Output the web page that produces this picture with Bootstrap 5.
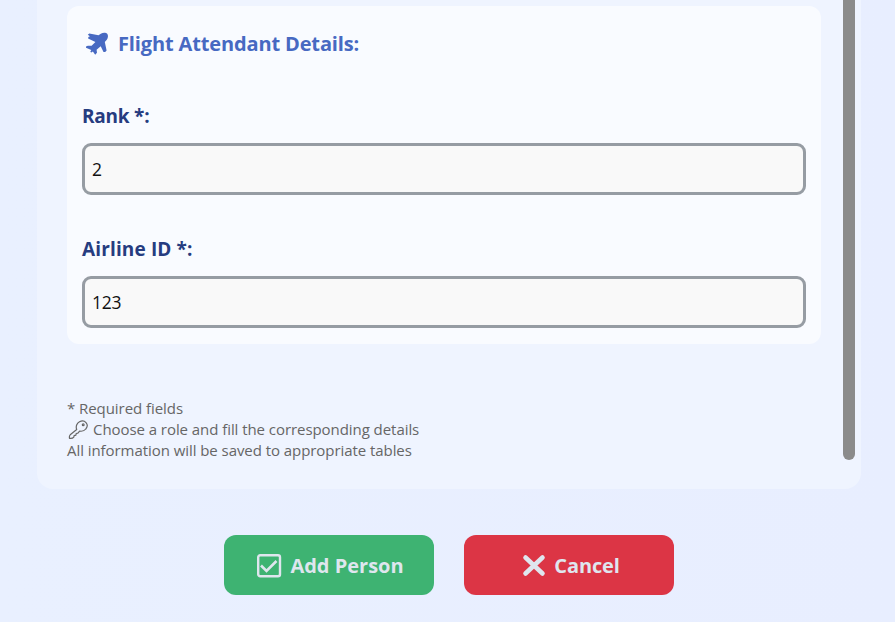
<!DOCTYPE html>
<html lang="en">
<head>
<meta charset="utf-8">
<meta name="viewport" content="width=device-width, initial-scale=1">
<title>Add Person</title>
<link href="https://cdn.jsdelivr.net/npm/bootstrap@5.3.0/dist/css/bootstrap.min.css" rel="stylesheet">
<style>
body{font-family:"Segoe UI","Open Sans","Noto Sans",sans-serif;background:linear-gradient(90deg,#e9f0ff,#e8eeff);height:622px;overflow:hidden}
.panel{margin-left:37px;width:824px;height:489px;background:#eff4ff;border-radius:0 0 16px 16px;padding:6px 6px 0 30px}
.content-col{width:754px}
.details{height:338px;background:#f9fbff;border-radius:12px;padding:22px 15px 0}
.details-title{height:32px;font-size:20px;line-height:32px;color:#4769c2;padding-left:3px;letter-spacing:-.14px;gap:9px;margin-bottom:43px}
.field-label{display:block;font-size:19px;line-height:26px;color:#263c80;letter-spacing:-.22px;margin-bottom:14px}
.field + .field{margin-top:41px}
.field + .field .field-label{letter-spacing:.14px}
.field-input{height:52px;border:3px solid #969ca3;border-radius:9px;background:#f9f9f9;font-size:17.500px;letter-spacing:-.3px;color:#111;padding:0 7px}
.field-input:focus{background:#f9f9f9;box-shadow:none;border-color:#4769c2}
.notes{margin-top:54px;font-size:15px;line-height:21px;color:#666;letter-spacing:-.06px}
.track{width:12px;height:454px}
.thumb{height:460px;margin-top:-6px;background:#8b8b8b;border-radius:0 0 6px 6px}
.actions{margin-top:46px;padding-left:224px;gap:30px}
.action{width:210px;height:60px;border:0;border-radius:12px;font-size:20px;color:#dfe6ee;padding:7px 11px 6px 13px}
.action:hover{color:#fff}
.add{background:#3eb372}.cancel{background:#dc3545;letter-spacing:-.15px;padding-left:15px}
.add:hover{background:#36a267}.cancel:hover{background:#c92f3e}
</style>
<script src="https://cdn.jsdelivr.net/npm/bootstrap@5.3.0/dist/js/bootstrap.bundle.min.js"></script>
</head>
<body>
<main class="panel d-flex justify-content-between">
  <div class="content-col">
    <section class="details">
      <h2 class="details-title d-flex align-items-center fw-bold">
        <svg width="24" height="24" viewBox="0 0 24 24" fill="#4769c2"><path d="M2.800 2.800 4.300 1.600l9.200 1.700 2.300-1.600c2.100-1.100 5.100-1.200 6.400.1 1.200 1.400 1 4.200-.4 6l-2 2.300 1.800 8.500-1.400 1.500-1.700-.2-2.800-5.600-4.100 3.500.4 3-1.800 2-2.300-3.200-1.700 1-.9-.9 1-1.700L1 15.700l0-1.300 1.800-.7 3.800.1L10.400 10 3.100 6.400l.3-1.500 1.500-.7Z"/></svg>
        <span>Flight Attendant Details:</span>
      </h2>
      <div class="field">
        <label class="field-label fw-bold" for="rank">Rank *:</label>
        <input id="rank" class="field-input form-control" value="2">
      </div>
      <div class="field">
        <label class="field-label fw-bold" for="airline">Airline ID *:</label>
        <input id="airline" class="field-input form-control" value="123">
      </div>
    </section>
    <div class="notes">
      <div>* Required fields</div>
      <div class="d-flex align-items-center"><svg width="22" height="20" viewBox="0 0 22 20" fill="none" stroke="#666" stroke-width="1.200" stroke-linejoin="round" class="me-1"><path d="M9.700 9.500C8.500 6.500 9.800 3.200 12.500 1.800c2.200-1.200 5-.9 6.500.8 1.500 1.700 1.400 4.500-.2 6.400-1.500 1.900-3.800 2.500-6.200 2.100l-1.700 2-1.700.4-.3 1.700-1.800.5-.3 1.400c-1 1.200-2.500 1.500-4.300 1.200-.3-1.500-.2-2.600.7-3.500Z"/><circle cx="16.200" cy="4.800" r=".9"/></svg><span>Choose a role and fill the corresponding details</span></div>
      <div>All information will be saved to appropriate tables</div>
    </div>
  </div>
  <div class="track"><div class="thumb"></div></div>
</main>
<div class="actions d-flex">
  <button class="action add btn fw-bold d-flex align-items-center justify-content-center gap-2"><svg width="26" height="26" viewBox="0 0 26 26" fill="none" stroke="#dfe6ee" stroke-width="2.400"><rect x="2.200" y="2.200" width="21.800" height="21" rx="2"/><path d="m5 12.500 5.500 5.500L20.500 8" stroke-width="2.600"/></svg><span>Add Person</span></button>
  <button class="action cancel btn fw-bold d-flex align-items-center justify-content-center gap-2"><svg width="24" height="24" viewBox="0 0 24 24" stroke="#dfe6ee" stroke-width="4.600" stroke-linecap="round"><path d="m3.500 3.500 17 16m0-16-17 16"/></svg><span>Cancel</span></button>
</div>
</body>
</html>
